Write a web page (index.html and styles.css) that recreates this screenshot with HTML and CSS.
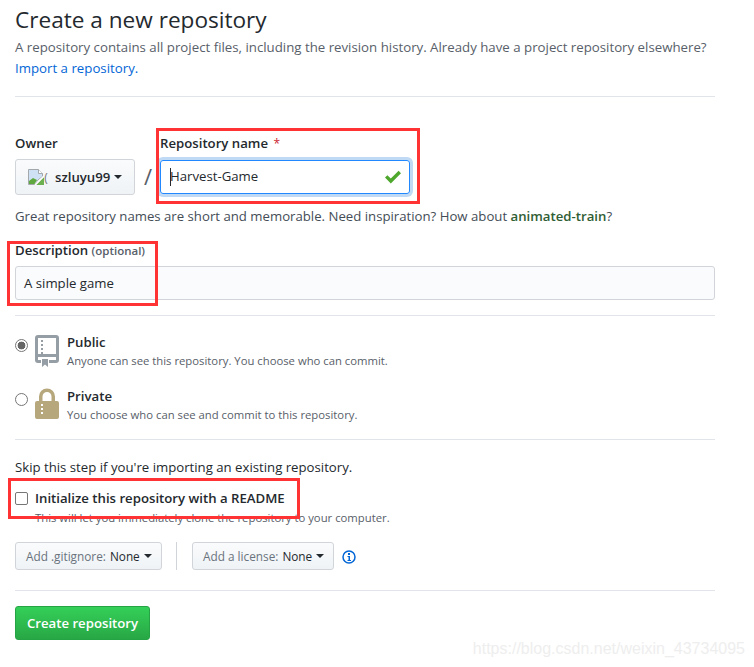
FILE: index.html
```html
<!DOCTYPE html>
<html lang="en">
<head>
  <meta charset="UTF-8" />
  <title>Create a new repository</title>
  <link rel="stylesheet" href="styles.css">
</head>
<body>
  <div class="page">
    <h1>Create a new repository</h1>
    <p class="lead">A repository contains all project files, including the revision history. Already have a project repository elsewhere?<br><a href="#">Import a repository.</a></p>
    <hr class="rule-top">

    <div class="name-row">
      <div class="owner">
        <label>Owner</label>
        <button class="btn owner-btn">
          <svg class="broken" width="16" height="16" viewBox="0 0 16 16">
            <path d="M.5.500h10l4 4v3L10 11l-3 4.500H.5z" fill="#cfe2f5" stroke="#a3a8ad"/>
            <path d="M1 15v-3l4-3 4 2-2.500 4z" fill="#5ea83f"/>
            <path d="M10.500.500v4h4" fill="#fff" stroke="#a3a8ad"/>
            <path d="M8 16l8-8v8z" fill="#5ea83f" opacity="0.9"/>
            <path d="M7 16l9-9" stroke="#fff" stroke-width="1.500"/>
          </svg>
          <span class="clip">(</span>
          <span class="owner-name">szluyu99</span><span class="caret"></span>
        </button>
      </div>
      <span class="slash">/</span>
      <div class="repo">
        <label>Repository name <span class="req">*</span></label>
        <div class="repo-input">
          <span class="cursor"></span><span class="repo-value">Harvest-Game</span>
          <svg class="check" width="16" height="14" viewBox="0 0 16 14"><path fill="#4fa82e" d="M16 3.200L5.800 13.400 0 7.600l2.400-2.400 3.400 3.400L13.600.8z"/></svg>
        </div>
      </div>
    </div>
    <p class="note">Great repository names are short and memorable. Need inspiration? How about <strong>animated-train</strong>?</p>

    <label class="desc-label">Description <span class="optional">(optional)</span></label>
    <div class="text-input">A simple game</div>
    <hr class="rule-desc">

    <div class="choice choice-public">
      <span class="radio checked"></span>
      <svg class="repo-icon" width="24" height="32" viewBox="0 0 24 32">
        <path fill="#959da5" fill-rule="evenodd" d="M3 0h18a3 3 0 0 1 3 3v22a3 3 0 0 1-3 3h-7v-3h7v-3H3v3h3v3H3a3 3 0 0 1-3-3V3a3 3 0 0 1 3-3zm0 3v16h18V3z"/>
        <path fill="#959da5" d="M6 5h2v2H6zM6 9h2v2H6zM6 13h2v2H6zM6 17h2v2H6zM7 24h6v8l-3-2.500L7 32z"/>
      </svg>
      <div>
        <div class="choice-title">Public</div>
        <div class="choice-text">Anyone can see this repository. You choose who can commit.</div>
      </div>
    </div>
    <div class="choice choice-private">
      <span class="radio"></span>
      <svg class="repo-icon lock-icon" width="24" height="31" viewBox="0 0 24 31">
        <path fill="#b7a77c" fill-rule="evenodd" d="M4 13V8.500a8 8 0 0 1 16 0V13h2a2 2 0 0 1 2 2v14a2 2 0 0 1-2 2H2a2 2 0 0 1-2-2V15a2 2 0 0 1 2-2zm3.500 0h9V8.500a4.500 4.500 0 0 0-9 0z"/>
        <path fill="#fff" d="M6 16h2v2H6zM6 20h2v2H6zM6 24h2v2H6z"/>
      </svg>
      <div>
        <div class="choice-title">Private</div>
        <div class="choice-text">You choose who can see and commit to this repository.</div>
      </div>
    </div>
    <hr class="rule-choice">

    <p class="skip">Skip this step if you're importing an existing repository.</p>
    <div class="init">
      <span class="checkbox"></span>
      <span class="init-title">Initialize this repository with a README</span>
    </div>
    <p class="init-text">This will let you immediately clone the repository to your computer.</p>

    <div class="add-row">
      <button class="btn small gitignore"><span class="muted">Add .gitignore:</span> None<span class="caret"></span></button>
      <span class="add-sep"></span>
      <button class="btn small license"><span class="muted">Add a license:</span> None<span class="caret"></span></button>
      <svg class="info" width="14" height="14" viewBox="0 0 14 14">
        <circle cx="7" cy="7" r="6" fill="none" stroke="#0366d6" stroke-width="1.500"/>
        <path fill="#0366d6" d="M6 3h2v2H6zM5.500 6H8v4h1v1H5.500v-1h1V7h-1z"/>
      </svg>
    </div>
    <hr class="rule-add">

    <button class="create">Create repository</button>

    <div class="mark mark-name"></div>
    <div class="mark mark-desc"></div>
    <div class="mark mark-init"></div>
    <div class="watermark">https://blog.csdn.net/weixin_43734095</div>
  </div>
</body>
</html>
```

FILE: styles.css
```css
* {
  box-sizing: border-box;
}

body {
  margin: 0;
  background: #fff;
  color: #24292e;
  font-family: 'Open Sans', 'Noto Sans', sans-serif;
  font-size: 13.2px;
}

.page {
  position: relative;
  width: 754px;
  height: 667px;
  padding: 0 39px 0 15px;
  overflow: hidden;
}

h1 {
  margin: 0;
  padding-top: 4px;
  font-size: 22.6px;
  line-height: 32px;
  font-weight: 400;
}

p {
  margin: 0;
}

a {
  color: #0366d6;
  text-decoration: none;
}

hr {
  height: 1px;
  margin: 0;
  border: 0;
  background: #e1e4e8;
}

.lead {
  margin-top: 1px;
  color: #586069;
  font-size: 13.25px;
  line-height: 21px;
}

.rule-top {
  margin-top: 17px;
}

label {
  display: block;
  font-weight: 600;
  font-size: 13.2px;
  line-height: 20px;
}

.name-row {
  display: flex;
  margin-top: 36px;
}

.owner label {
  margin-bottom: 6px;
}

.btn {
  display: inline-flex;
  align-items: center;
  border: 1px solid #d1d5da;
  border-radius: 3px;
  background: linear-gradient(#fafbfc, #eff3f6);
  color: #24292e;
  font-family: inherit;
  font-weight: 600;
}

.owner-btn {
  width: 120px;
  height: 36px;
  padding: 0 0 0 12px;
  font-size: 13.2px;
}

.broken {
  flex: none;
}

.clip {
  width: 4px;
  overflow: hidden;
  margin-right: 7px;
  color: #777;
  font-size: 12px;
  font-weight: 400;
}

.caret {
  display: inline-block;
  margin-left: 4px;
  border: 4px solid transparent;
  border-top-color: #24292e;
  border-bottom: 0;
}

.slash {
  width: 25px;
  margin-top: 25px;
  padding-left: 1px;
  text-align: center;
  color: #586069;
  font-size: 22px;
  line-height: 36px;
}

.repo {
  width: 250px;
}

.repo label {
  margin-bottom: 6px;
}

.req {
  margin-left: 2px;
  color: #cb2431;
  font-size: 12px;
  font-weight: 400;
}

.repo-input {
  position: relative;
  display: flex;
  align-items: center;
  height: 34px;
  padding-left: 9px;
  border: 1px solid #2188ff;
  border-radius: 3px;
  box-shadow: 0 0 0 3px rgba(3, 102, 214, 0.25);
}

.repo-value {
  margin-top: -2px;
  margin-left: -1px;
}

.cursor {
  width: 1px;
  height: 18px;
  background: #24292e;
  margin-right: 0;
}

.check {
  position: absolute;
  right: 8px;
  top: 9px;
}

.note {
  margin-top: 11px;
  color: #444d56;
  line-height: 20px;
}

.note strong {
  color: #2f5d34;
  font-weight: 600;
}

.desc-label {
  margin-top: 14px;
  margin-bottom: 5px;
}

.optional {
  color: #586069;
  font-size: 11.5px;
}

.text-input {
  display: flex;
  align-items: center;
  height: 34px;
  padding-left: 8px;
  border: 1px solid #d1d5da;
  border-radius: 3px;
  background: #fafbfc;
  color: #24292e;
}

.rule-desc {
  margin-top: 15px;
}

.choice {
  display: flex;
  line-height: 18px;
}

.choice-public {
  margin-top: 19px;
}

.choice-private {
  margin-top: 19px;
}

.radio {
  flex: none;
  width: 13px;
  height: 13px;
  margin-top: 4px;
  border: 1px solid #767676;
  border-radius: 50%;
  background: #fff;
}

.radio.checked {
  border-color: #767676;
  background: radial-gradient(circle, #666 0, #666 3.6px, #fff 4.2px);
}

.repo-icon {
  flex: none;
  margin: 0 8px 0 7px;
}

.lock-icon {
  margin-top: -1px;
}

.choice-title {
  margin-top: -2px;
  font-weight: 600;
  font-size: 13.2px;
}

.choice-text {
  margin-top: 1px;
  color: #586069;
  font-size: 11.3px;
}

.rule-choice {
  margin-top: 15px;
}

.skip {
  margin-top: 17px;
  line-height: 20px;
}

.init {
  display: flex;
  align-items: center;
  margin-top: 11px;
  line-height: 20px;
}

.checkbox {
  width: 13px;
  height: 13px;
  margin-right: 7px;
  border: 1px solid #767676;
  border-radius: 2px;
  background: #fff;
}

.init-title {
  font-weight: 600;
}

.init-text {
  margin-top: 0;
  padding-left: 20px;
  color: #586069;
  font-size: 11.3px;
  line-height: 20px;
}

.add-row {
  display: flex;
  align-items: center;
  margin-top: 14px;
}

.small {
  height: 28px;
  padding: 0 0 0 10px;
  font-size: 11.8px;
  font-weight: 400;
}

.small .muted {
  margin-right: 4px;
  color: #6a737d;
}

.gitignore {
  width: 147px;
}

.license {
  width: 142px;
}

.add-sep {
  width: 1px;
  height: 28px;
  margin: 0 15px 0 14px;
  background: #d1d5da;
}

.info {
  margin-left: 8px;
  margin-top: 2px;
}

.rule-add {
  margin-top: 20px;
}

.create {
  display: block;
  width: 135px;
  height: 34px;
  margin-top: 15px;
  border: 1px solid #26a344;
  border-radius: 3px;
  background: linear-gradient(#34d058, #28a745);
  color: #fff;
  font-family: inherit;
  font-size: 13.2px;
  font-weight: 600;
}

/* red boxes drawn over the screenshot */
.mark {
  position: absolute;
  border: 3px solid #f33;
}

.mark-name {
  left: 156px;
  top: 128px;
  width: 264px;
  height: 76px;
}

.mark-desc {
  left: 7px;
  top: 241px;
  width: 151px;
  height: 65px;
}

.mark-init {
  left: 8px;
  top: 478px;
  width: 292px;
  height: 41px;
}

.watermark {
  position: absolute;
  right: 9px;
  top: 640px;
  color: #eeeeee;
  font-family: 'Liberation Sans', sans-serif;
  font-size: 16px;
}
```
